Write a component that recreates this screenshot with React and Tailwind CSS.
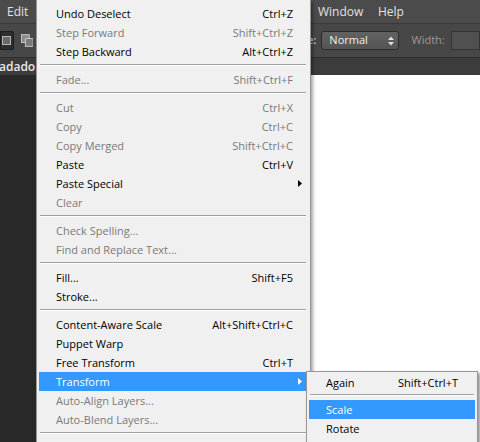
import React from "react";

const MAIN = [
  { l: "Undo Deselect", s: "Ctrl+Z" },
  { l: "Step Forward", s: "Shift+Ctrl+Z", d: true },
  { l: "Step Backward", s: "Alt+Ctrl+Z" },
  { sep: true },
  { l: "Fade...", s: "Shift+Ctrl+F", d: true },
  { sep: true },
  { l: "Cut", s: "Ctrl+X", d: true },
  { l: "Copy", s: "Ctrl+C", d: true },
  { l: "Copy Merged", s: "Shift+Ctrl+C", d: true },
  { l: "Paste", s: "Ctrl+V" },
  { l: "Paste Special", arrow: true },
  { l: "Clear", d: true },
  { sep: true },
  { l: "Check Spelling...", d: true },
  { l: "Find and Replace Text...", d: true },
  { sep: true },
  { l: "Fill...", s: "Shift+F5" },
  { l: "Stroke..." },
  { sep: true },
  { l: "Content-Aware Scale", s: "Alt+Shift+Ctrl+C" },
  { l: "Puppet Warp" },
  { l: "Free Transform", s: "Ctrl+T" },
  { l: "Transform", arrow: true, a: true },
  { l: "Auto-Align Layers...", d: true },
  { l: "Auto-Blend Layers...", d: true },
  { sep: true },
  { l: "Define Brush Preset...", d: true },
];

const SUB = [
  { l: "Again", s: "Shift+Ctrl+T" },
  { sep: true },
  { l: "Scale", a: true },
  { l: "Rotate" },
  { l: "Skew" },
];

function Arrow({ white }) {
  return (
    <svg width="4" height="7" viewBox="0 0 4 7" className="absolute right-[4px] top-[6px]">
      <path d="M0 0L4 3.5L0 7Z" fill={white ? "#ffffff" : "#000000"} />
    </svg>
  );
}

function Row({ it, sub }) {
  if (it.sep) {
    return (
      <div className={sub ? "h-[8px] pt-[2px] px-[1px]" : "h-[9px] pt-[3px] pl-[1px]"}>
        <div className="h-px bg-[#a0a0a0]" />
        <div className="h-px bg-white" />
      </div>
    );
  }
  const color = it.a ? "bg-[#3399ff] text-white" : it.d ? "text-[#7a7a7a]" : "text-black";
  return (
    <div className={`relative flex h-[19px] items-center pt-[2px] pl-[17px] ${sub ? "pr-[17px]" : "pr-[13px]"} ${color}`}>
      <span className="flex-1 whitespace-nowrap">{it.l}</span>
      {it.s && <span className="whitespace-nowrap">{it.s}</span>}
      {it.arrow && <Arrow white={it.a} />}
    </div>
  );
}

export default function App() {
  return (
    <div
      className="relative w-[480px] h-[442px] overflow-hidden bg-[#282828] flex flex-col text-[11px]"
      style={{ fontFamily: '"Open Sans", "Noto Sans", sans-serif' }}
    >
      {/* menu bar */}
      <div className="h-[24px] flex items-center bg-[#4b4b4b] border-b border-[#3a3a3a] text-[12px] text-[#e2e2e2]">
        <span className="w-[318px] pl-[7px]">Edit</span>
        <span className="w-[60px]">Window</span>
        <span>Help</span>
      </div>
      {/* options bar */}
      <div className="h-[34px] flex items-center bg-[#474747] border-b border-[#2e2e2e] text-[11px]">
        <div className="w-[14px] h-[19px] bg-[#2e2e2e] border border-[#1e1e1e] rounded-r-[2px] flex items-center justify-end pr-[2px]">
          <div className="w-[9px] h-[9px] border border-[#b5b5b5] bg-[#6a6a6a]" />
        </div>
        <svg width="13" height="13" viewBox="0 0 13 13" className="ml-[7px]">
          <rect x="0.5" y="0.5" width="8" height="8" fill="#8a8a8a" stroke="#c8c8c8" />
          <rect x="4.5" y="4.5" width="8" height="8" fill="#7a7a7a" stroke="#c8c8c8" />
        </svg>
        <span className="w-[291px] text-right text-[#d8d8d8] font-semibold">Style:</span>
        <div className="ml-[5px] w-[79px] h-[19px] rounded-[3px] border border-[#2b2b2b] bg-gradient-to-b from-[#626262] to-[#555555] flex items-center pl-[7px] pr-[4px] text-[#f0f0f0]">
          <span className="flex-1">Normal</span>
          <svg width="6" height="10" viewBox="0 0 6 10">
            <path d="M0 4L3 0.5L6 4Z M0 6L3 9.5L6 6Z" fill="#e0e0e0" />
          </svg>
        </div>
        <span className="ml-[13px] text-[#9a9a9a]">Width:</span>
        <div className="ml-[6px] w-[30px] h-[19px] bg-[#505050] border border-[#333333]" />
      </div>
      {/* tab row */}
      <div className="h-[17px] bg-[#3c3c3c] flex items-center text-[#e8e8e8] font-semibold text-[12px] whitespace-nowrap overflow-hidden">
        <span className="-ml-[1px]">adado.jpg @ 66,7% (RGB/8)</span>
      </div>
      {/* work area */}
      <div className="flex-1 flex">
        <div className="w-[311px] bg-[#282828]" />
        <div className="flex-1 bg-white" />
      </div>

      {/* Edit menu */}
      <div className="absolute left-[36px] top-0 w-[275px] bg-[#f0f0f0] border-l border-r border-[#979797] pt-[4px] pl-[2px] pr-[4px] shadow-[2px_2px_3px_rgba(0,0,0,0.35)]">
        {MAIN.map((it, i) => (
          <Row key={i} it={it} />
        ))}
      </div>

      {/* Transform submenu */}
      <div className="absolute left-[306px] top-[371px] w-[172px] bg-[#f0f0f0] border border-[#979797] pt-[1px] pl-[2px] pr-[2px] shadow-[2px_2px_3px_rgba(0,0,0,0.45)]">
        {SUB.map((it, i) => (
          <Row key={i} it={it} sub />
        ))}
      </div>
    </div>
  );
}
